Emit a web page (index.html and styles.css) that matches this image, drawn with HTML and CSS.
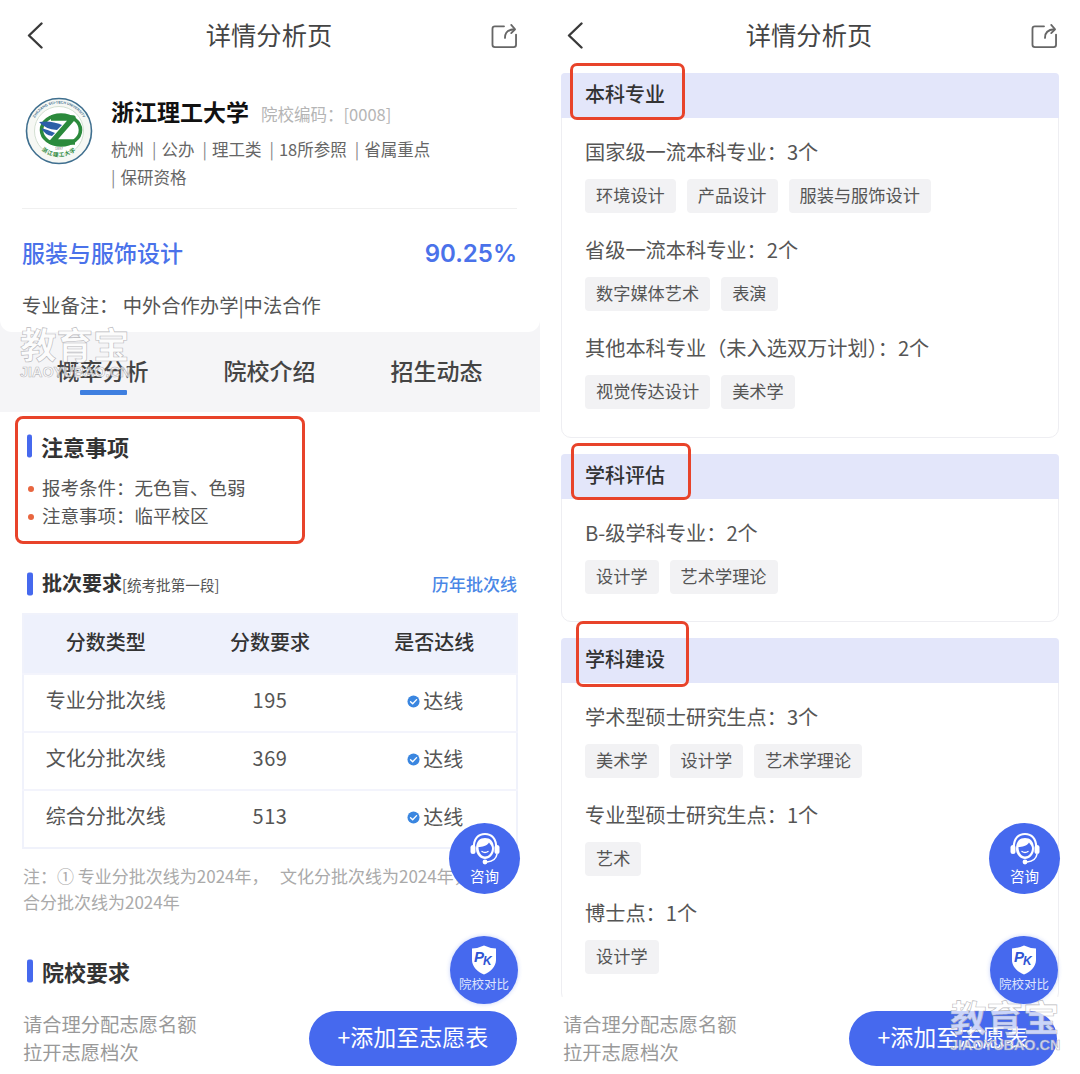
FILE: index.html
```html
<!DOCTYPE html>
<html lang="zh-CN">
<head>
    <meta charset="UTF-8">
    <meta name="viewport" content="width=device-width, initial-scale=1.0">
    <title>详情分析页</title>
    <link rel="stylesheet" href="styles.css">
</head>
<body>

    <!-- Общие иконки -->
    <svg class="icon-defs" aria-hidden="true">
        <symbol id="icon-back" viewBox="0 0 16 27">
            <path d="M14.5 1.5 L2 13.5 L14.5 25.5" fill="none" stroke="#3a3a3a" stroke-width="2.4" stroke-linecap="round" stroke-linejoin="round"/>
        </symbol>
        <symbol id="icon-share" viewBox="0 0 27 26">
            <path d="M13 3.5 H3.5 Q1 3.5 1 6 V22.5 Q1 25 3.5 25 H23 Q25.5 25 25.5 22.5 V12" fill="none" stroke="#666" stroke-width="1.9" stroke-linecap="round"/>
            <path d="M14 15.5 Q14 7 23.5 6.5" fill="none" stroke="#666" stroke-width="1.9" stroke-linecap="round"/>
            <path d="M20.5 2 L24.5 6.5 L20.5 10.5" fill="none" stroke="#666" stroke-width="1.9" stroke-linecap="round" stroke-linejoin="round"/>
        </symbol>
        <symbol id="icon-check" viewBox="0 0 14 14">
            <circle cx="7" cy="7" r="6.5" fill="#3a86e0"/>
            <path d="M3.8 7.2 L6.1 9.4 L10.3 5" fill="none" stroke="#fff" stroke-width="1.5" stroke-linecap="round" stroke-linejoin="round"/>
        </symbol>
        <symbol id="icon-headset" viewBox="0 0 32 33">
            <path d="M5 17 C4 6 10 2 16 2 C22 2 28 6 27 17" fill="none" stroke="#fff" stroke-width="2.2"/>
            <path d="M7 17 C7 9 11 6 16 6 C21 6 25 9 25 17 C25 23 20 27 16 27 C12 27 7 23 7 17 Z" fill="#fff"/>
            <path d="M9.5 15 C13 15 18 14 20 10.5 C21.5 12.5 22.8 14 23 16 C23 21 19.5 24.5 16 24.5 C12.5 24.5 9.5 20.5 9.5 15 Z" fill="#4669ee"/>
            <path d="M13 19.5 Q16 21.5 19 19.5" fill="none" stroke="#fff" stroke-width="1.4" stroke-linecap="round"/>
            <rect x="1.5" y="13" width="5" height="9" rx="2.5" fill="#fff"/>
            <rect x="25.5" y="13" width="5" height="9" rx="2.5" fill="#fff"/>
            <path d="M28 22 Q27 29 18 30" fill="none" stroke="#fff" stroke-width="1.6"/>
            <circle cx="16" cy="30" r="2.4" fill="#fff"/>
        </symbol>
        <symbol id="icon-shield" viewBox="0 0 26 30">
            <path d="M1 3.5 Q8 3 13 0.5 Q18 3 25 3.5 V15 C25 22 19 27 13 29.5 C7 27 1 22 1 15 Z" fill="#fff"/>
        </symbol>
    </svg>

    <div class="screens">

        <!-- Левый экран -->
        <section class="phone">
            <header class="nav-bar">
                <svg class="nav-back"><use href="#icon-back"/></svg>
                <h1>详情分析页</h1>
                <svg class="nav-share"><use href="#icon-share"/></svg>
            </header>

            <main class="page-body">
                <div class="top-wrap">
                    <div class="school-card">
                        <div class="school-row">
                            <svg class="school-logo" viewBox="0 0 68 68">
                                <circle cx="34" cy="34" r="32.5" fill="#f6f8f4" stroke="#3f6f8f" stroke-width="1.6"/>
                                <circle cx="34" cy="34" r="24.5" fill="#fff" stroke="#c9d8c8" stroke-width="0.8"/>
                                <path id="logo-top-arc" d="M6.5 34 A27.5 27.5 0 0 1 61.5 34" fill="none"/>
                                <path id="logo-bottom-arc" d="M9 42 A26.5 26.5 0 0 0 59 42" fill="none"/>
                                <text class="logo-top-text"><textPath href="#logo-top-arc" startOffset="50%" text-anchor="middle">ZHEJIANG SCI-TECH UNIVERSITY</textPath></text>
                                <ellipse cx="36" cy="33" rx="19.5" ry="15" fill="none" stroke="#2b8a3c" stroke-width="3.6"/>
                                <path d="M26 21 H48 L27 45 H50" fill="none" stroke="#2b8a3c" stroke-width="5.5" stroke-linejoin="round"/>
                                <path d="M14 25 Q26 23 37 28 L32 33 Q20 32 14 25 Z" fill="#2c5fa8"/>
                                <path d="M16 31 Q24 33 30 36 L27 39 Q20 38 16 31 Z" fill="#2c5fa8"/>
                                <text class="logo-year" x="34" y="52.5" text-anchor="middle">1897</text>
                                <text class="logo-bottom-text"><textPath href="#logo-bottom-arc" startOffset="50%" text-anchor="middle">浙江理工大学</textPath></text>
                            </svg>
                            <div class="school-info">
                                <div class="school-name-line">
                                    <span class="school-name">浙江理工大学</span>
                                    <span class="school-code">院校编码：[0008]</span>
                                </div>
                                <div class="school-meta">
                                    <span>杭州</span>
                                    <span>公办</span>
                                    <span>理工类</span>
                                    <span>18所参照</span>
                                    <span>省属重点</span>
                                    <span>保研资格</span>
                                </div>
                            </div>
                        </div>
                        <div class="major-row">
                            <span class="major-name">服装与服饰设计</span>
                            <span class="major-rate">90.25%</span>
                        </div>
                        <p class="major-note">专业备注：&nbsp;中外合作办学|中法合作</p>
                    </div>
                    <nav class="tabs">
                        <a class="tab active">概率分析</a>
                        <a class="tab">院校介绍</a>
                        <a class="tab">招生动态</a>
                    </nav>
                </div>

                <div class="notice-box">
                    <h2 class="section-title notice-title">注意事项</h2>
                    <ul class="notice-list">
                        <li>报考条件：无色盲、色弱</li>
                        <li>注意事项：临平校区</li>
                    </ul>
                </div>

                <div class="batch-head">
                    <h2 class="section-title batch-title">批次要求<small>[统考批第一段]</small></h2>
                    <a class="batch-link">历年批次线</a>
                </div>

                <table class="score-table">
                    <thead>
                        <tr><th>分数类型</th><th>分数要求</th><th>是否达线</th></tr>
                    </thead>
                    <tbody>
                        <tr>
                            <td>专业分批次线</td><td class="num">195</td>
                            <td><span class="pass"><svg class="pass-icon"><use href="#icon-check"/></svg>达线</span></td>
                        </tr>
                        <tr>
                            <td>文化分批次线</td><td class="num">369</td>
                            <td><span class="pass"><svg class="pass-icon"><use href="#icon-check"/></svg>达线</span></td>
                        </tr>
                        <tr>
                            <td>综合分批次线</td><td class="num">513</td>
                            <td><span class="pass"><svg class="pass-icon"><use href="#icon-check"/></svg>达线</span></td>
                        </tr>
                    </tbody>
                </table>

                <p class="table-note">注：① 专业分批次线为2024年，&nbsp;&nbsp;&nbsp;文化分批次线为2024年，综合分批次线为2024年</p>

                <h2 class="section-title school-req">院校要求</h2>
            </main>

            <footer class="bottom-bar">
                <p class="bottom-tip">请合理分配志愿名额<br>拉开志愿档次</p>
                <button class="add-btn">+添加至志愿表</button>
            </footer>

            <a class="float-btn float-consult">
                <svg class="float-headset"><use href="#icon-headset"/></svg>
                <span>咨询</span>
            </a>
            <a class="float-btn float-pk">
                <span class="pk-shield">
                    <svg class="float-shield"><use href="#icon-shield"/></svg>
                    <b>P<i>K</i></b>
                </span>
                <span>院校对比</span>
            </a>

            <div class="watermark watermark-top">
                <span class="wm-cn">教育宝</span>
                <span class="wm-en">JIAOYUBAO.CN</span>
            </div>
        </section>

        <!-- Правый экран -->
        <section class="phone">
            <header class="nav-bar">
                <svg class="nav-back"><use href="#icon-back"/></svg>
                <h1>详情分析页</h1>
                <svg class="nav-share"><use href="#icon-share"/></svg>
            </header>

            <main class="page-body page-body-cards">
                <div class="info-card">
                    <h3 class="info-head"><span class="mark mark-1"></span>本科专业</h3>
                    <div class="info-body">
                        <div class="info-group">
                            <p class="info-label">国家级一流本科专业：3个</p>
                            <div class="chips"><span>环境设计</span><span>产品设计</span><span>服装与服饰设计</span></div>
                        </div>
                        <div class="info-group">
                            <p class="info-label">省级一流本科专业：2个</p>
                            <div class="chips"><span>数字媒体艺术</span><span>表演</span></div>
                        </div>
                        <div class="info-group">
                            <p class="info-label">其他本科专业（未入选双万计划）：2个</p>
                            <div class="chips"><span>视觉传达设计</span><span>美术学</span></div>
                        </div>
                    </div>
                </div>

                <div class="info-card">
                    <h3 class="info-head"><span class="mark mark-2"></span>学科评估</h3>
                    <div class="info-body">
                        <div class="info-group">
                            <p class="info-label">B-级学科专业：2个</p>
                            <div class="chips"><span>设计学</span><span>艺术学理论</span></div>
                        </div>
                    </div>
                </div>

                <div class="info-card">
                    <h3 class="info-head"><span class="mark mark-3"></span>学科建设</h3>
                    <div class="info-body">
                        <div class="info-group">
                            <p class="info-label">学术型硕士研究生点：3个</p>
                            <div class="chips"><span>美术学</span><span>设计学</span><span>艺术学理论</span></div>
                        </div>
                        <div class="info-group">
                            <p class="info-label">专业型硕士研究生点：1个</p>
                            <div class="chips"><span>艺术</span></div>
                        </div>
                        <div class="info-group">
                            <p class="info-label">博士点：1个</p>
                            <div class="chips"><span>设计学</span></div>
                        </div>
                    </div>
                </div>
            </main>

            <footer class="bottom-bar">
                <p class="bottom-tip">请合理分配志愿名额<br>拉开志愿档次</p>
                <button class="add-btn">+添加至志愿表</button>
            </footer>

            <a class="float-btn float-consult">
                <svg class="float-headset"><use href="#icon-headset"/></svg>
                <span>咨询</span>
            </a>
            <a class="float-btn float-pk">
                <span class="pk-shield">
                    <svg class="float-shield"><use href="#icon-shield"/></svg>
                    <b>P<i>K</i></b>
                </span>
                <span>院校对比</span>
            </a>

            <div class="watermark watermark-bottom">
                <span class="wm-cn">教育宝</span>
                <span class="wm-en">JIAOYUBAO.CN</span>
            </div>
        </section>
    </div>

</body>
</html>
```

FILE: styles.css
```css
:root {
    --blue: #4669ee;
    --link-blue: #4a87e6;
    --red: #e8432a;
    --text: #444;
    --text-dark: #333;
    --text-gray: #666;
    --text-light: #aaa;
    --cjk: "Noto Sans CJK SC", "Noto Sans", sans-serif;
}
* {
    box-sizing: border-box;
}
body {
    margin: 0;
    background: #fff;
    color: var(--text);
    font-family: var(--cjk);
}
h1, h2, h3, p, ul {
    margin: 0;
    padding: 0;
}
.icon-defs {
    position: absolute;
    width: 0;
    height: 0;
}
.screens {
    display: grid;
    grid-template-columns: 540px 540px;
    height: 1074px;
    overflow: hidden;
}
.phone {
    position: relative;
    display: flex;
    flex-direction: column;
    height: 1074px;
    overflow: hidden;
}
.page-body {
    flex: 1;
    min-height: 0;
    overflow: hidden;
}
/* Красные рамки заходят выше карточки */
.page-body-cards {
    margin-top: -16px;
    padding-top: 17px;
}

/* Шапка */
.nav-bar {
    display: flex;
    align-items: center;
    justify-content: space-between;
    height: 72px;
    padding: 0 22px 2px 27px;
    flex-shrink: 0;
}
.nav-bar h1 {
    margin: -3px 0 0 4px;
    font-size: 25.3px;
    font-weight: 400;
    line-height: 34px;
    color: #444;
}
.nav-back {
    width: 16px;
    height: 27px;
}
.nav-share {
    width: 27px;
    height: 25px;
}

/* Карточка вуза */
.top-wrap {
    background: #f5f5f7;
}
.school-card {
    height: 260px;
    padding: 25px 23px 0 22px;
    background: #fff;
    border-radius: 0 0 12px 12px;
}
.school-row {
    display: flex;
    gap: 18px;
    height: 112px;
    border-bottom: 1px solid #f0f0f0;
}
.school-logo {
    width: 68px;
    height: 68px;
    margin-left: 3px;
    flex-shrink: 0;
}
.school-info {
    width: 345px;
}
.school-name-line {
    display: flex;
    align-items: baseline;
    gap: 12px;
    height: 32px;
    margin-top: -2px;
    line-height: 32px;
}
.school-name {
    font-size: 23px;
    font-weight: 600;
    color: #111;
}
.school-code {
    font-size: 16.5px;
    color: #b5b5b5;
}
.school-meta {
    display: flex;
    flex-wrap: wrap;
    margin-top: 8px;
    font-size: 16.5px;
    line-height: 28px;
    color: var(--text-gray);
}
.school-meta span:not(:first-child)::before {
    content: "|";
    margin-right: 5px;
    color: #888;
}
.school-meta span:not(:last-child) {
    margin-right: 8px;
}
.logo-top-text {
    font-family: "Liberation Sans", sans-serif;
    font-size: 3.6px;
    font-weight: 700;
    fill: #3f6f8f;
}
.logo-year {
    font-family: "Liberation Sans", sans-serif;
    font-size: 3.5px;
    fill: #777;
}
.logo-bottom-text {
    font-family: var(--cjk);
    font-size: 5.5px;
    font-weight: 700;
    letter-spacing: 0.8px;
    fill: #2b8a3c;
}
.major-row {
    display: flex;
    align-items: center;
    justify-content: space-between;
    height: 34px;
    margin-top: 26px;
    color: #4a72ea;
}
.major-name {
    font-size: 23px;
    font-weight: 500;
}
.major-rate {
    padding-top: 2px;
    font-family: Inter, "Liberation Sans", sans-serif;
    font-size: 24px;
    font-weight: 600;
}
.major-note {
    margin-top: 21px;
    font-size: 19.3px;
    line-height: 30px;
    color: #555;
}

/* Вкладки */
.tabs {
    display: grid;
    grid-template-columns: repeat(3, 167px);
    align-items: start;
    height: 80px;
    padding: 19px 0 0 19px;
}
.tab {
    position: relative;
    justify-self: center;
    font-size: 23px;
    font-weight: 500;
    line-height: 38px;
    color: #444;
}
.tab.active::after {
    content: "";
    position: absolute;
    left: 23px;
    right: 22px;
    bottom: -6px;
    height: 5px;
    border-radius: 1px;
    background: #3f7fe0;
}

/* Заголовки разделов */
.section-title {
    position: relative;
    font-weight: 700;
    color: #333;
}
.section-title::before {
    content: "";
    position: absolute;
    top: 50%;
    width: 5px;
    height: 23px;
    border-radius: 2px;
    background: var(--blue);
    transform: translateY(-50%);
}

/* Красная рамка */
.notice-box {
    width: 290px;
    height: 128px;
    margin: 4px 0 0 15px;
    padding: 11px 0 0 9px;
    border: 3.5px solid var(--red);
    border-radius: 8px;
}
.notice-title {
    padding-left: 14px;
    font-size: 22px;
    line-height: 32px;
}
.notice-title::before {
    left: 0;
}
.notice-list {
    margin-top: 11px;
    list-style: none;
}
.notice-list li {
    position: relative;
    padding-left: 15px;
    font-size: 18.5px;
    line-height: 28px;
    color: #555;
}
.notice-list li::before {
    content: "";
    position: absolute;
    left: 1px;
    top: 13px;
    width: 6px;
    height: 6px;
    border-radius: 50%;
    background: #e8663f;
}

/* Таблица */
.batch-head {
    display: flex;
    align-items: center;
    justify-content: space-between;
    height: 30px;
    margin: 25px 23px 0 27px;
}
.batch-title {
    padding-left: 15px;
    font-size: 20px;
    line-height: 30px;
}
.batch-title::before {
    left: 0;
    width: 6px;
}
.batch-title small {
    font-size: 14.6px;
    font-weight: 400;
    color: #555;
}
.batch-link {
    padding-bottom: 2px;
    font-size: 17px;
    font-weight: 500;
    color: var(--link-blue);
}
.score-table {
    width: 496px;
    margin: 14px 0 0 22px;
    border-collapse: collapse;
    table-layout: fixed;
    border: 2px solid #f0f2fb;
    text-align: center;
}
.score-table th {
    height: 60px;
    padding: 0 0 6px;
    background: #eef1fc;
    font-size: 20px;
    font-weight: 500;
    color: #333;
}
.score-table td {
    height: 58px;
    padding: 0 0 7px;
    border-top: 2px solid #f3f4fc;
    font-size: 20px;
    color: #555;
}
.score-table .num {
    letter-spacing: 0.5px;
}
.pass {
    display: inline-flex;
    align-items: center;
    gap: 3px;
    margin-left: 2px;
}
.pass-icon {
    width: 13px;
    height: 13px;
    margin-top: 2px;
}
.table-note {
    width: 475px;
    margin: 14px 0 0 23px;
    font-size: 17px;
    line-height: 26px;
    color: var(--text-light);
}
.school-req {
    margin: 40px 0 0 27px;
    padding-left: 15px;
    font-size: 22px;
    line-height: 32px;
}
.school-req::before {
    left: 0;
    width: 6px;
}

/* Нижняя панель */
.bottom-bar {
    display: flex;
    justify-content: space-between;
    align-items: center;
    flex-shrink: 0;
    height: 77px;
    padding: 0 23px;
    background: #fff;
}
.bottom-tip {
    padding-top: 4px;
    font-size: 19.3px;
    line-height: 28px;
    color: #999;
}
.add-btn {
    width: 208px;
    height: 55px;
    margin-top: 5px;
    padding: 0 0 4px;
    border: none;
    border-radius: 28px;
    background: var(--blue);
    color: #fff;
    font-family: var(--cjk);
    font-size: 23px;
    cursor: pointer;
}

/* Плавающие кнопки */
.float-btn {
    position: absolute;
    display: flex;
    flex-direction: column;
    align-items: center;
    border-radius: 50%;
    background: var(--blue);
    color: #fff;
}
.float-consult {
    left: 449px;
    top: 823px;
    width: 71px;
    height: 71px;
    padding-top: 9px;
    font-size: 14.5px;
    line-height: 22px;
}
.float-headset {
    width: 32px;
    height: 33px;
}
.float-pk {
    left: 450px;
    top: 936px;
    width: 68px;
    height: 68px;
    padding-top: 9px;
    font-size: 12.5px;
    line-height: 16px;
    color: #dfe5fd;
    box-shadow: 0 0 4px rgba(70, 105, 238, 0.3);
}
.pk-shield {
    position: relative;
    display: flex;
    justify-content: center;
    width: 26px;
    height: 30px;
    margin-bottom: 1px;
}
.float-shield {
    width: 26px;
    height: 30px;
}
.pk-shield b {
    position: absolute;
    top: 2px;
    left: 3px;
    font-family: "Liberation Sans", sans-serif;
    font-size: 15px;
    font-style: italic;
    line-height: 20px;
    color: #2f55d4;
}
.pk-shield i {
    position: relative;
    top: 3px;
    left: -1px;
    font-size: 12px;
}

/* Карточки справа */
.info-card {
    margin: 0 21px 16px;
    border: 1px solid #eeeef2;
    border-radius: 8px 8px 10px 10px;
}
.info-card:nth-child(2) .info-body {
    padding-bottom: 27px;
}
.info-head {
    position: relative;
    height: 45px;
    margin: -1px -1px 0;
    padding-left: 24px;
    background: #e3e6fa;
    border-radius: 4px 4px 0 0;
    font-size: 20px;
    font-weight: 500;
    line-height: 41px;
    color: #333;
}
.mark {
    position: absolute;
    top: -10px;
    border: 3.5px solid var(--red);
    border-radius: 7px;
}
.mark-1 {
    left: 9px;
    width: 115px;
    height: 57px;
}
.mark-2 {
    left: 10px;
    top: -11px;
    width: 120px;
    height: 57px;
}
.mark-3 {
    left: 15px;
    top: -17px;
    width: 113px;
    height: 66px;
}
.info-body {
    padding: 19px 24px 28px 23px;
}
.info-group + .info-group {
    margin-top: 22px;
}
.info-label {
    padding-top: 1px;
    padding-bottom: 1px;
    font-size: 20.2px;
    line-height: 28px;
    color: #555;
}
.chips {
    display: flex;
    gap: 11px;
    margin-top: 12px;
}
.chips span {
    height: 34px;
    padding: 0 11px;
    border-radius: 4px;
    background: #f2f2f4;
    font-size: 17.2px;
    line-height: 31px;
    color: #555;
}

/* Водяной знак */
.watermark {
    position: absolute;
    display: flex;
    flex-direction: column;
    pointer-events: none;
    color: rgba(255, 255, 255, 0.72);
    -webkit-text-stroke: 0.6px rgba(160, 160, 165, 0.75);
}
.wm-cn {
    font-size: 36.5px;
    font-weight: 700;
    line-height: 36px;
    white-space: nowrap;
}
.wm-en {
    margin-top: 2px;
    font-family: "Liberation Sans", sans-serif;
    font-size: 14.4px;
    font-weight: 700;
    line-height: 16px;
    white-space: nowrap;
}
.watermark-top {
    left: 20px;
    top: 326px;
}
.watermark-bottom {
    left: 410px;
    top: 999px;
}
```
